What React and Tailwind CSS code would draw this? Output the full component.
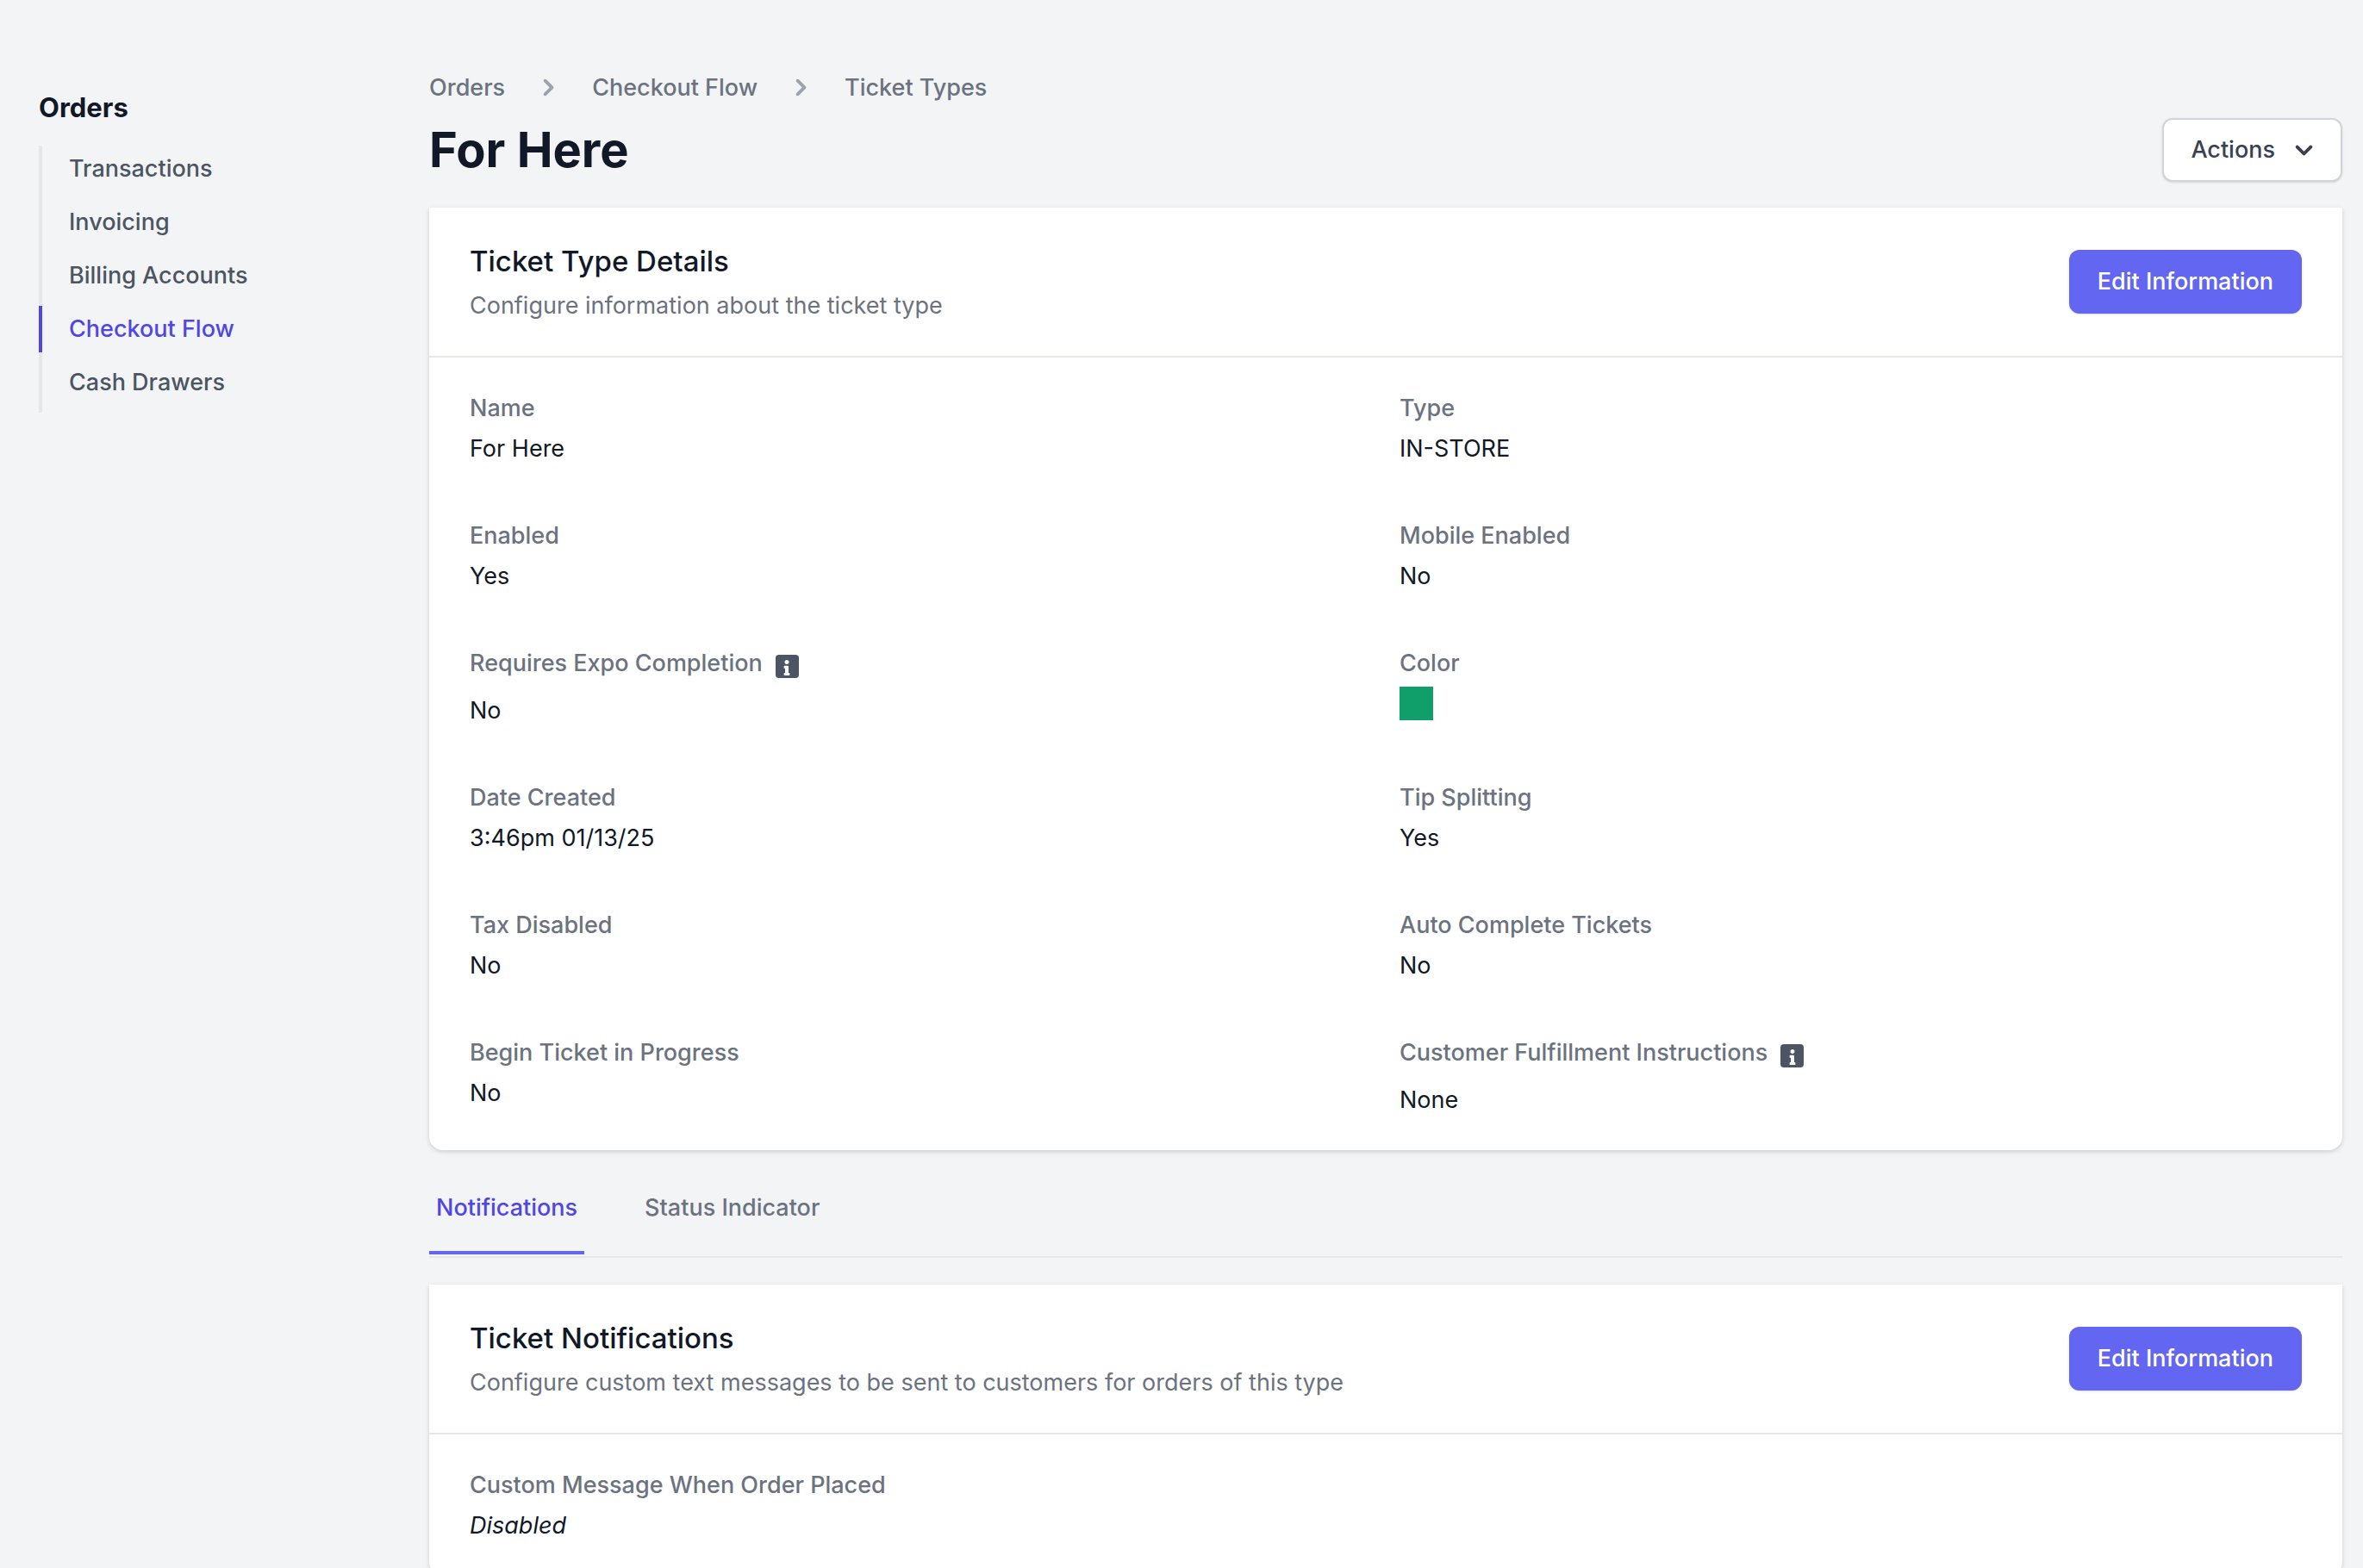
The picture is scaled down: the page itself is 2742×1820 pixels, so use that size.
import { useState } from 'react';
import { FaInfo } from 'react-icons/fa';
import clsx from 'clsx';

const navItems = ['Transactions', 'Invoicing', 'Billing Accounts', 'Checkout Flow', 'Cash Drawers'];
const crumbs = ['Orders', 'Checkout Flow', 'Ticket Types'];
const tabs = ['Notifications', 'Status Indicator'];

const details = [
  { label: 'Name', value: 'For Here' },
  { label: 'Type', value: 'IN-STORE' },
  { label: 'Enabled', value: 'Yes' },
  { label: 'Mobile Enabled', value: 'No' },
  { label: 'Requires Expo Completion', value: 'No', info: true },
  { label: 'Color', value: <div className="size-[39px] bg-[#109f6a]" /> },
  { label: 'Date Created', value: '3:46pm 01/13/25' },
  { label: 'Tip Splitting', value: 'Yes' },
  { label: 'Tax Disabled', value: 'No' },
  { label: 'Auto Complete Tickets', value: 'No' },
  { label: 'Begin Ticket in Progress', value: 'No' },
  { label: 'Customer Fulfillment Instructions', value: 'None', info: true },
];

const ChevronRight = () => (
  <svg viewBox="0 0 20 20" fill="currentColor" className="size-[39px] text-[#9ca3af]" aria-hidden="true">
    <path
      fillRule="evenodd"
      clipRule="evenodd"
      d="M7.293 14.707a1 1 0 010-1.414L10.586 10 7.293 6.707a1 1 0 011.414-1.414l4 4a1 1 0 010 1.414l-4 4a1 1 0 01-1.414 0z"
    />
  </svg>
);

const ChevronDown = () => (
  <svg viewBox="0 0 20 20" fill="currentColor" className="size-[39px]" aria-hidden="true">
    <path
      fillRule="evenodd"
      clipRule="evenodd"
      d="M5.293 7.293a1 1 0 011.414 0L10 10.586l3.293-3.293a1 1 0 111.414 1.414l-4 4a1 1 0 01-1.414 0l-4-4a1 1 0 010-1.414z"
    />
  </svg>
);

const Sidebar = () => (
  <aside className="w-[453px] shrink-0 pt-[101px]">
    <h2 className="text-[31px] leading-[47px] font-bold text-[#111827]">Orders</h2>
    <nav className="mt-[21px]">
      <ul>
        {navItems.map((item) => {
          const active = item === 'Checkout Flow';
          return (
            <li key={item} className="border-l-4 border-[#e5e7eb] pb-2">
              <a
                href="#"
                className={clsx(
                  '-ml-1 block border-l-4 py-2 pl-[31px] leading-[38px] font-medium',
                  active ? 'border-[#4f46e5] text-[#4f46e5]' : 'border-transparent text-[#4b5563]'
                )}
              >
                {item}
              </a>
            </li>
          );
        })}
      </ul>
    </nav>
  </aside>
);

const Card = ({ title, description, children }) => (
  <section className="rounded-b-2xl bg-white shadow-[0_2px_6px_rgba(0,0,0,0.1),0_2px_4px_rgba(0,0,0,0.06)]">
    <div className="flex items-center justify-between border-b-2 border-[#e5e7eb] px-[47px] py-[39px]">
      <div>
        <h3 className="text-[33px] leading-[47px] font-medium text-[#111827]">{title}</h3>
        <p className="mt-2 text-[#6b7280]">{description}</p>
      </div>
      <button
        type="button"
        className="rounded-xl bg-[#6366f1] px-[33px] py-[17px] leading-10 font-medium text-white shadow-sm"
      >
        Edit Information
      </button>
    </div>
    <dl className="grid grid-cols-2 gap-x-8 gap-y-[62px] px-[47px] py-[39px]">{children}</dl>
  </section>
);

const Field = ({ label, value, info, italic }) => (
  <div>
    <dt className="flex font-medium text-[#6b7280]">
      {label}
      {info && (
        <button
          type="button"
          aria-label={`About ${label}`}
          className="my-[10px] ml-[15px] flex size-[27px] items-center justify-center rounded bg-[#4b5563] pt-0.5 text-white"
        >
          <FaInfo className="size-[18px]" />
        </button>
      )}
    </dt>
    <dd className={clsx('mt-2 text-[#111827]', italic && 'italic')}>{value}</dd>
  </div>
);

export default function App() {
  const [activeTab, setActiveTab] = useState('Notifications');

  return (
    <div className="flex h-screen overflow-hidden bg-[#f3f4f6] pr-6 pl-[45px] font-['Inter',sans-serif] text-[27px] leading-[39px]">
      <Sidebar />
      <main className="min-w-0 flex-1 pt-[82px]">
        <nav className="flex items-center gap-[31px]" aria-label="Breadcrumb">
          {crumbs.map((crumb, i) => (
            <div key={crumb} className="flex items-center gap-[31px]">
              {i > 0 && <ChevronRight />}
              <a href="#" className="font-medium text-[#6b7280]">{crumb}</a>
            </div>
          ))}
        </nav>

        <div className="mt-4 flex items-center justify-between">
          <h1 className="text-[56px] leading-[70px] font-bold text-[#111827]">For Here</h1>
          <button
            type="button"
            className="flex items-center gap-3.5 rounded-xl border-2 border-[#d1d5db] bg-white py-[15px] pr-[23px] pl-[31px] leading-10 font-medium text-[#374151] shadow-sm"
          >
            Actions
            <ChevronDown />
          </button>
        </div>

        <div className="mt-[30px]">
          <Card title="Ticket Type Details" description="Configure information about the ticket type">
            {details.map((field) => (
              <Field key={field.label} {...field} />
            ))}
          </Card>
        </div>

        <div className="mt-4 flex gap-[62px] border-b-2 border-[#e5e7eb] pb-0.5" role="tablist">
          {tabs.map((tab) => (
            <button
              key={tab}
              type="button"
              role="tab"
              aria-selected={tab === activeTab}
              onClick={() => setActiveTab(tab)}
              className={clsx(
                'border-b-4 px-2 py-[31px] font-medium',
                tab === activeTab ? 'border-[#6366f1] text-[#4f46e5]' : 'border-transparent text-[#6b7280]'
              )}
            >
              {tab}
            </button>
          ))}
        </div>

        <div className="mt-[31px]">
          <Card
            title="Ticket Notifications"
            description="Configure custom text messages to be sent to customers for orders of this type"
          >
            <Field label="Custom Message When Order Placed" value="Disabled" italic />
          </Card>
        </div>
      </main>
    </div>
  );
}
